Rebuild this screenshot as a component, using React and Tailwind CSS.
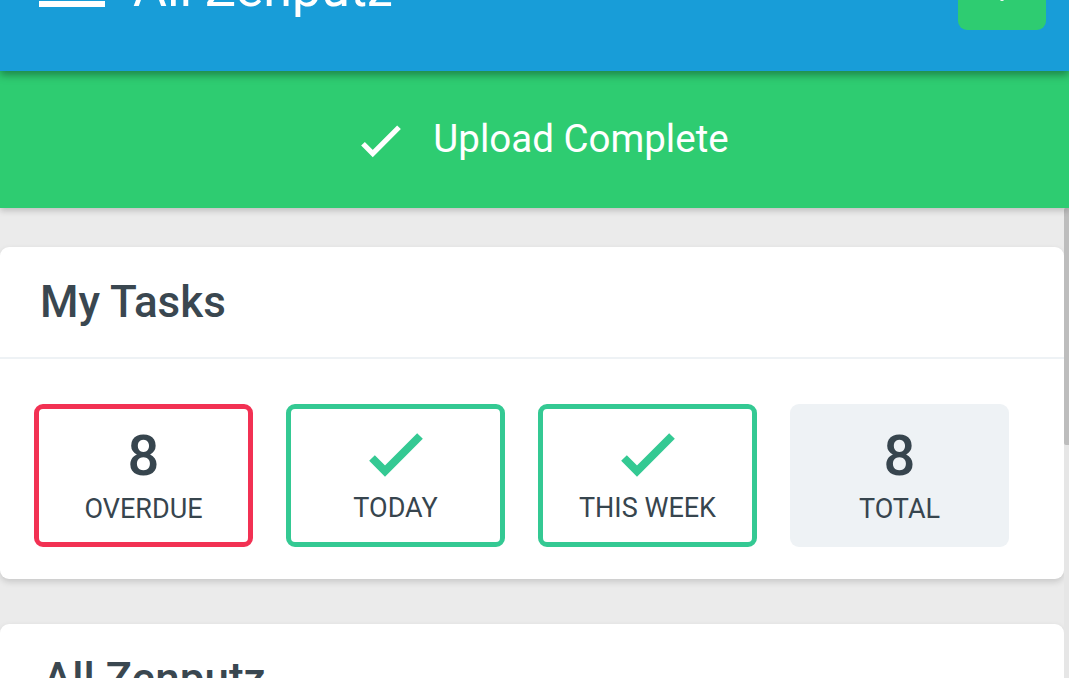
import { Plus } from 'lucide-react';

const tiles = [
  { kind: 'count', value: 8, label: 'OVERDUE', tone: 'red' },
  { kind: 'done', label: 'TODAY', tone: 'green' },
  { kind: 'done', label: 'THIS WEEK', tone: 'green' },
  { kind: 'count', value: 8, label: 'TOTAL', tone: 'plain' },
];

function CheckMark({ className, width = 8 }) {
  return (
    <svg viewBox="0 0 56 48" className={className} fill="none">
      <polyline points="4,29 17,42 52,7" stroke="currentColor" strokeWidth={width} />
    </svg>
  );
}

function Tile({ tile }) {
  const box =
    tile.tone === 'red'
      ? 'border-[5px] border-[#f23153] bg-white'
      : tile.tone === 'green'
      ? 'border-[5px] border-[#34c993] bg-white'
      : 'bg-[#eef2f5]';
  return (
    <div className={`w-[219px] h-[143px] rounded-[9px] flex flex-col items-center justify-center ${box}`}>
      {tile.kind === 'count' ? (
        <div className="text-[56px] leading-[56px] font-medium text-[#37454e]">{tile.value}</div>
      ) : (
        <CheckMark className="w-[56px] h-[48px] text-[#34c993] mb-[6px]" />
      )}
      <div className="text-[27px] leading-[30px] mt-[10px] text-[#37454e]">{tile.label}</div>
    </div>
  );
}

export default function App() {
  return (
    <div className="h-[678px] overflow-hidden bg-[#ebebeb] font-['Roboto',sans-serif]">
      <header className="relative z-20 -mt-[66px] h-[137px] bg-[#189dd8] shadow-[0_4px_8px_rgba(0,0,0,0.35)]">
        <div className="h-[104px] flex items-center pl-[39px] pr-[23px]">
          <div className="flex flex-col gap-[12px]">
            <span className="block w-[66px] h-[6px] bg-white" />
            <span className="block w-[66px] h-[6px] bg-white" />
            <span className="block w-[66px] h-[6px] bg-white" />
          </div>
          <h1 className="ml-[28px] mt-[6px] text-[52px] leading-none text-white">All Zenputz</h1>
          <button className="ml-auto w-[88px] h-[88px] rounded-[9px] bg-[#2ecc71] flex items-start justify-center pt-[22px] text-white">
            <Plus size={44} strokeWidth={2.4} />
          </button>
        </div>
      </header>

      <div className="relative z-10 h-[137px] bg-[#2ecc71] shadow-[0_3px_6px_rgba(0,0,0,0.18)] flex items-center justify-center pl-[20px] text-white">
        <CheckMark className="w-[42px] h-[36px]" width={7} />
        <span className="ml-[31px] text-[38.5px] leading-none">Upload Complete</span>
      </div>

      <div className="flex">
        <main className="flex-1 pt-[39px] flex flex-col gap-[45px]">
          <section className="bg-white rounded-[9px] shadow-[0_3px_6px_rgba(0,0,0,0.15)]">
            <div className="h-[112px] flex items-center px-[40px] border-b-2 border-[#eef2f5]">
              <h2 className="text-[44px] font-medium text-[#3a4750]">My Tasks</h2>
            </div>
            <div className="flex gap-[33px] pl-[34px] pt-[45px] pb-[32px]">
              {tiles.map((t) => (
                <Tile key={t.label} tile={t} />
              ))}
            </div>
          </section>

          <section className="bg-white rounded-[9px] shadow-[0_3px_6px_rgba(0,0,0,0.15)]">
            <div className="h-[110px] flex items-center px-[43px]">
              <h2 className="text-[44px] font-medium text-[#3a4750]">All Zenputz</h2>
            </div>
          </section>
        </main>
        <div className="w-[5px] bg-[#e6e6e6]">
          <div className="h-[237px] bg-[#bdbdbd] rounded-l-[2px]" />
        </div>
      </div>
    </div>
  );
}
